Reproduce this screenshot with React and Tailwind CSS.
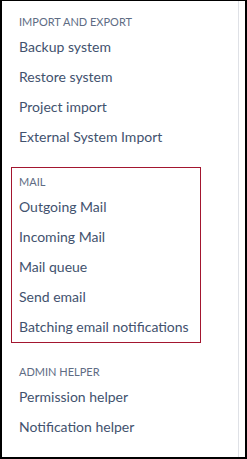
import React from 'react';

const sections = [
  {
    title: 'Import and export',
    items: ['Backup system', 'Restore system', 'Project import', 'External System Import'],
  },
  {
    title: 'Mail',
    items: ['Outgoing Mail', 'Incoming Mail', 'Mail queue', 'Send email', 'Batching email notifications'],
    highlight: true,
  },
  {
    title: 'Admin helper',
    items: ['Permission helper', 'Notification helper'],
  },
];

const Section = ({ title, items, highlight }) => (
  <div
    className={`ml-[9px] w-[190px] border px-[7px] pt-[6px] ${highlight ? 'border-[#a3162f]' : 'border-transparent'}`}
  >
    <h3 className="mb-[2px] text-[11px] leading-[16px] font-normal uppercase text-[#5e6c84]">{title}</h3>
    <ul>
      {items.map((item) => (
        <li key={item}>
          <a href="#" className="block h-[30px] text-[14px] leading-[30px] text-[#42526e] whitespace-nowrap">
            {item}
          </a>
        </li>
      ))}
    </ul>
  </div>
);

const App = () => {
  return (
    <div
      className="w-[247px] h-[459px] bg-white border-t border-l-2 border-r-2 border-b-2 border-black flex overflow-hidden"
      style={{ fontFamily: '"Segoe UI", Lato, sans-serif' }}
    >
      <nav className="w-[237px] border-r border-[#dfe1e6] pt-[6px] flex flex-col gap-[14px]">
        {sections.map((s) => (
          <Section key={s.title} {...s} />
        ))}
      </nav>
    </div>
  );
};

export default App;
